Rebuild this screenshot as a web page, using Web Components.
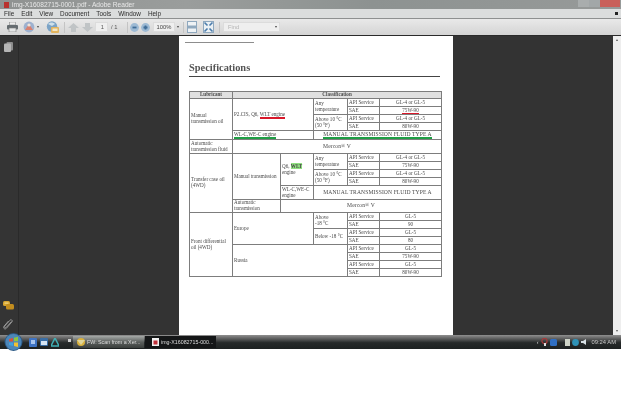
<!DOCTYPE html>
<html>
<head>
<meta charset="utf-8">
<title>img-X16082715-0001.pdf - Adobe Reader</title>
<style>
  html, body { margin: 0; background: #fff; }
  body { font-family: "Liberation Sans", sans-serif; }
</style>
</head>
<body>
<reader-app></reader-app>

<script>
// window chrome
class WinTitlebar extends HTMLElement {
  constructor() {
    super();
    this.attachShadow({ mode: 'open' });
    this.shadowRoot.innerHTML = `
<style>
  :host {
    display: flex; align-items: center; height: 9px; padding-left: 4px; gap: 3px;
    background: linear-gradient(90deg, #8f9291, #9a9d9c 30%, #8d9291 60%, #979a99);
    color: #e8e8e8; font: 6.6px "Liberation Sans", sans-serif; overflow: hidden;
  }
  .logo { width: 5px; height: 6px; background: #b8322e; }
  .name { flex: 1; white-space: nowrap; }
  .ctl { display: flex; height: 7px; align-self: flex-start; margin-right: 1px; }
  .ctl i { display: block; height: 7px; }
  .min { width: 11px; background: #a9adad; }
  .max { width: 11px; background: #a2a7a8; }
  .close { width: 20px; background: #c9605a; }
</style>
<span class="logo"></span><span class="name"><slot></slot></span>
<span class="ctl"><i class="min"></i><i class="max"></i><i class="close"></i></span>`;
  }
}
customElements.define('win-titlebar', WinTitlebar);

class WinMenubar extends HTMLElement {
  constructor() {
    super();
    this.attachShadow({ mode: 'open' });
    this.shadowRoot.innerHTML = `
<style>
  :host {
    display: flex; align-items: center; height: 9px; padding: 0 3px 0 4px; gap: 7px;
    background: #dbdddd; border-bottom: 1px solid #8e9090;
    color: #2c2c2c; font: 6.4px "Liberation Sans", sans-serif;
  }
  .end { margin-left: auto; width: 3px; height: 3px; background: #222; }
</style>
<slot></slot><span class="end"></span>`;
  }
}
customElements.define('win-menubar', WinMenubar);

class WinToolbar extends HTMLElement {
  constructor() {
    super();
    this.attachShadow({ mode: 'open' });
    this.shadowRoot.innerHTML = `
<style>
  :host {
    display: flex; align-items: center; height: 16px; padding-left: 7px;
    background: linear-gradient(#e9e9e9, #d4d4d4); border-bottom: 1px solid #2a2a2a;
    color: #555; font: 5.8px "Liberation Sans", sans-serif;
  }
  svg { display: block; flex: none; }
  .sep { width: 1px; height: 11px; background: #c4c4c4; flex: none; }
  .box {
    flex: none; height: 10px; box-sizing: border-box; background: #efefef;
    border: 1px solid #dcdcdc; display: flex; align-items: center;
  }
  .caret {
    flex: none; width: 0; height: 0; border: 1.5px solid transparent;
    border-top: 2px solid #444; border-bottom: 0;
  }
</style>
<svg width="11" height="10" viewBox="0 0 11 10"><rect x="2.5" y="0" width="6" height="3" fill="#eee" stroke="#888" stroke-width=".6"/><rect x="0" y="3" width="11" height="4.5" rx="1" fill="#656c70"/><rect x="2" y="6" width="7" height="4" fill="#e4e6e6" stroke="#7a7a7a" stroke-width=".6"/></svg>
<svg style="margin-left:5px" width="12" height="12" viewBox="0 0 12 12"><circle cx="6" cy="6" r="5.4" fill="#9db1cf"/><path d="M2 9 6 3l4 6z" fill="#d9806f"/><circle cx="6" cy="4" r="1.6" fill="#efe3da"/></svg>
<span class="caret" style="margin:0 0 0 2px"></span>
<svg style="margin-left:7px" width="13" height="13" viewBox="0 0 13 13"><circle cx="6" cy="5.5" r="5.2" fill="#7ba3c6"/><path d="M2 3c2-2 5-2 7 0l-3 2z" fill="#cfe0ea"/><rect x="5" y="6" width="8" height="6" rx="1" fill="#e2b45e"/><rect x="6.5" y="7.5" width="5" height="2.5" fill="#f4e7c6"/></svg>
<span class="sep" style="margin-left:5px"></span>
<svg style="margin-left:3px" width="11" height="9" viewBox="0 0 11 9"><path d="M5.5 0 11 5H8v4H3V5H0z" fill="#c0c4c6"/></svg>
<svg style="margin-left:3px" width="11" height="9" viewBox="0 0 11 9"><path d="M5.5 9 11 4H8V0H3v4H0z" fill="#c0c4c6"/></svg>
<span class="box" style="width:13px;margin-left:2px;justify-content:flex-end;padding-right:3px">1</span>
<span style="flex:none;width:20px;padding-left:3px;box-sizing:border-box">/ 1</span>
<span class="sep" style="margin-left:-1px"></span>
<svg style="margin-left:2px" width="9" height="9" viewBox="0 0 9 9"><circle cx="4.5" cy="4.5" r="4.4" fill="#9dbad4"/><rect x="2.5" y="3.6" width="4" height="1.8" fill="#3f6d98"/></svg>
<svg style="margin-left:2px" width="9" height="9" viewBox="0 0 9 9"><circle cx="4.5" cy="4.5" r="4.4" fill="#9dbad4"/><path d="M2.5 3.6h1.1V2.5h1.8v1.1h1.1v1.8H5.4v1.1H3.6V5.4H2.5z" fill="#3f6d98"/></svg>
<span class="box" style="width:22px;margin-left:3px;justify-content:center;color:#444">100%</span>
<span class="caret" style="margin-left:2px"></span>
<span class="sep" style="margin-left:4px"></span>
<svg style="margin-left:3px" width="10" height="12" viewBox="0 0 10 12"><rect x=".5" y=".5" width="9" height="11" fill="#eef2f5" stroke="#8fa8be"/><rect x="0" y="4.5" width="10" height="3" fill="#8fa8be"/></svg>
<svg style="margin-left:6px" width="11" height="12" viewBox="0 0 11 12"><rect x=".5" y=".5" width="10" height="11" fill="#eaf0f4" stroke="#8fa8be"/><path d="M1.5 1.5 4.5 4.5M9.5 1.5 6.5 4.5M1.5 10.5 4.5 7.5M9.5 10.5 6.5 7.5" stroke="#4a7bab" stroke-width="1.6"/></svg>
<span class="sep" style="margin-left:5px"></span>
<span class="box" style="width:57px;margin-left:3px;padding-left:4px;color:#b4b4b4;gap:0">Find<span class="caret" style="margin-left:auto;margin-right:2px"></span></span>`;
  }
}
customElements.define('win-toolbar', WinToolbar);

// left navigation strip
class ReaderRail extends HTMLElement {
  constructor() {
    super();
    this.attachShadow({ mode: 'open' });
    this.shadowRoot.innerHTML = `
<style>
  :host {
    display: flex; flex-direction: column; align-items: center; flex: none;
    width: 19px; box-sizing: border-box; background: #343434; border-right: 1px solid #2a2a2a;
    padding: 6px 2px 5px 0;
  }
  svg { display: block; }
  .gap { flex: 1; }
</style>
<svg width="9" height="10" viewBox="0 0 9 10"><rect x="2.5" y="0" width="6.5" height="8.5" rx="1" fill="#8d8d8d"/><rect x="0" y="1.5" width="7" height="8.5" rx="1" fill="#b5b5b5"/></svg>
<span class="gap"></span>
<svg width="11" height="9" viewBox="0 0 11 9"><rect x="0" y="0" width="7" height="5" rx="1.5" fill="#d8a52e"/><rect x="3" y="3" width="8" height="5.5" rx="1.5" fill="#c28d1f"/><rect x="1.5" y="1.5" width="4" height="1.2" fill="#f0d78a"/></svg>
<svg style="margin-top:9px" width="10" height="11" viewBox="0 0 10 11"><path d="M8.5 2.5 3.2 8.4c-.9 1-2.4-.2-1.5-1.3L7 1.2C8-.1 10 1.4 9 2.8L3.4 9.3C2 11 -.4 9 1 7.3L5.5 2" fill="none" stroke="#a8a8a8" stroke-width=".8"/></svg>`;
  }
}
customElements.define('reader-rail', ReaderRail);

class ReaderScrollbar extends HTMLElement {
  constructor() {
    super();
    this.attachShadow({ mode: 'open' });
    this.shadowRoot.innerHTML = `
<style>
  :host {
    display: flex; flex-direction: column; align-items: center; justify-content: space-between;
    flex: none; width: 8px; box-sizing: border-box; padding: 3px 0; background: #eeeeee;
  }
  i { display: block; width: 0; height: 0; border: 1.5px solid transparent; }
  .up { border-top: 0; border-bottom: 2px solid #555; }
  .down { border-bottom: 0; border-top: 2px solid #555; }
</style>
<i class="up"></i><i class="down"></i>`;
  }
}
customElements.define('reader-scrollbar', ReaderScrollbar);

// the scanned table
class SpecTable extends HTMLElement {
  constructor() {
    super();
    this.attachShadow({ mode: 'open' });
    const api = (v, s = 'API Service') => `<td>${s}</td><td class="c">${v}</td>`;
    const atf = 'MANUAL TRANSMISSION FLUID TYPE A';
    this.shadowRoot.innerHTML = `
<style>
  :host { display: block; color: #4a4a4a; font: 5.1px/5.6px "Liberation Serif", serif; }
  table { border-collapse: collapse; table-layout: fixed; width: 252px; border: 1px solid #555; }
  td { border: 1px solid #7d7d7d; padding: 0 1px; }
  .c { text-align: center; }
  .h { background: #e0e0e0; font-weight: bold; text-align: center; }
  .big { font-size: 5.6px; letter-spacing: .1px; }
  .red { border-bottom: 2px solid #d8182a; }
  .red.thin { border-bottom-width: 1px; }
  .green { border-bottom: 2px solid #1f9e45; }
  .hl { background: #8fe07f; font-weight: bold; }
  tr { height: 8px; }
  .tall { height: 9px; }
</style>
<table>
  <colgroup>
    <col style="width:43px"><col style="width:48px"><col style="width:33px">
    <col style="width:34px"><col style="width:32px"><col style="width:62px">
  </colgroup>
  <tr style="height:7px"><td class="h">Lubricant</td><td class="h" colspan="5">Classification</td></tr>
  <tr><td rowspan="5">Manual<br>transmission oil</td>
    <td colspan="2" rowspan="4">P2.CIS, Q6, <span class="red">WLT engine</span></td>
    <td rowspan="2">Any<br>temperature</td>${api('GL-4 or GL-5')}</tr>
  <tr><td>SAE</td><td class="c"><span class="red thin">75W-90</span></td></tr>
  <tr><td rowspan="2">Above 10 °C<br>(50 °F)</td>${api('GL-4 or GL-5')}</tr>
  <tr>${api('80W-90', 'SAE')}</tr>
  <tr class="tall"><td colspan="2"><span class="green">WL-C,WE-C engine</span></td>
    <td colspan="3" class="c big"><span class="green">${atf}</span></td></tr>
  <tr style="height:14px"><td>Automatic<br>transmission fluid</td><td colspan="5" class="c big">Mercon® V</td></tr>
  <tr><td rowspan="6">Transfer case oil<br>(4WD)</td>
    <td rowspan="5">Manual transmission</td>
    <td rowspan="4">Q6, <span class="hl">WLT</span><br>engine</td>
    <td rowspan="2">Any<br>temperature</td>${api('GL-4 or GL-5')}</tr>
  <tr>${api('75W-90', 'SAE')}</tr>
  <tr><td rowspan="2">Above 10 °C<br>(50 °F)</td>${api('GL-4 or GL-5')}</tr>
  <tr>${api('80W-90', 'SAE')}</tr>
  <tr style="height:14px"><td>WL-C,WE-C<br>engine</td><td colspan="3" class="c big">${atf}</td></tr>
  <tr style="height:13px"><td>Automatic<br>transmission</td><td colspan="4" class="c big">Mercon® V</td></tr>
  <tr><td rowspan="8">Front differential<br>oil (4WD)</td>
    <td colspan="2" rowspan="4">Europe</td>
    <td rowspan="2">Above<br>-18 °C</td>${api('GL-5')}</tr>
  <tr>${api('90', 'SAE')}</tr>
  <tr><td rowspan="2">Below -18 °C</td>${api('GL-5')}</tr>
  <tr>${api('80', 'SAE')}</tr>
  <tr><td colspan="3" rowspan="4">Russia</td>${api('GL-5')}</tr>
  <tr>${api('75W-90', 'SAE')}</tr>
  <tr>${api('GL-5')}</tr>
  <tr>${api('80W-90', 'SAE')}</tr>
</table>`;
  }
}
customElements.define('spec-table', SpecTable);

class PdfPage extends HTMLElement {
  constructor() {
    super();
    this.attachShadow({ mode: 'open' });
    this.shadowRoot.innerHTML = `
<style>
  :host {
    display: block; flex: none; width: 274px; box-sizing: border-box;
    background: #fff; padding-top: 6px; overflow: hidden;
  }
  .top { width: 69px; height: 1px; margin-left: 6px; background: #8d8d8d; }
  h1 {
    margin: 19px 0 0 10px; font: bold 10.4px/12px "Liberation Serif", serif; color: #555;
  }
  .rule { width: 251px; height: 1px; margin: 2px 0 14px 10px; background: #444; }
  spec-table { margin-left: 10px; }
</style>
<div class="top"></div>
<h1><slot></slot></h1>
<div class="rule"></div>
<spec-table></spec-table>`;
  }
}
customElements.define('pdf-page', PdfPage);

class WinTaskbar extends HTMLElement {
  constructor() {
    super();
    this.attachShadow({ mode: 'open' });
    this.shadowRoot.innerHTML = `
<style>
  :host {
    display: flex; align-items: center; height: 14px; position: relative;
    background: linear-gradient(#909090, #6a6a6a 20%, #262a2a 55%, #1d2121);
    color: #dedede; font: 5.3px "Liberation Sans", sans-serif;
  }
  svg { display: block; flex: none; }
  .orb { position: absolute; left: 4px; top: -2px; }
  .quick { display: flex; gap: 3px; align-items: center; margin-left: 29px; flex: none; width: 44px; }
  .btn {
    flex: none; width: 71px; height: 12px; box-sizing: border-box; padding-left: 4px; margin-right: 1px;
    display: flex; align-items: center; gap: 2px; white-space: nowrap;
  }
  .btn.one { background: linear-gradient(#a5a9a7, #5c605e 50%, #3a3e3c); }
  .btn.two { background: #141617; }
  .tray { margin-left: auto; display: flex; align-items: center; gap: 2px; padding-right: 5px; }
  .time { margin-left: 4px; color: #c8c8c8; white-space: nowrap; font-size: 5.8px; }
</style>
<svg class="orb" width="19" height="18" viewBox="0 0 19 18">
  <circle cx="9.5" cy="9" r="9" fill="#2c5a86"/>
  <circle cx="9.5" cy="9" r="8" fill="#4c86b8"/>
  <path d="M5 6l4-1v3.5H5z" fill="#d8533c"/><path d="M10 4.8l4-1v4.5h-4z" fill="#8dc63f"/>
  <path d="M5 9.5h4V13l-4-1z" fill="#3fa3e0"/><path d="M10 9.5h4v4.5l-4-1z" fill="#f2c230"/>
</svg>
<span class="quick">
  <svg width="8" height="9" viewBox="0 0 8 9"><rect width="8" height="9" rx="1" fill="#3f74c4"/><rect x="2" y="2" width="4" height="4" fill="#a9c6ee"/></svg>
  <svg width="8" height="8" viewBox="0 0 8 8"><rect width="8" height="8" rx="1" fill="#3a6ea5"/><rect x="1" y="3" width="6" height="4" fill="#d7e5f2"/></svg>
  <svg width="8" height="9" viewBox="0 0 8 9"><path d="M4 0 8 8H0z" fill="none" stroke="#3fb0b5" stroke-width="1.5"/></svg>
  <svg style="margin-left:6px;margin-bottom:4px" width="3" height="3" viewBox="0 0 3 3"><rect width="3" height="3" fill="#cfcfcf"/></svg>
</span>
<span class="btn one">
  <svg width="8" height="8" viewBox="0 0 8 8"><circle cx="4" cy="4" r="4" fill="#d9b13c"/><path d="M0 2h8L4 7z" fill="#e0d59a"/></svg>
  <span>FW: Scan from a Xer...</span>
</span>
<span class="btn two">
  <svg width="7" height="8" viewBox="0 0 7 8" style="margin-left:3px"><rect width="7" height="8" fill="#f2f2f2"/><rect x="1.5" y="2.5" width="4" height="4" fill="#c2303a"/></svg>
  <span>img-X16082715-000...</span>
</span>
<span class="tray">
  <span style="color:#ddd">‹</span>
  <svg width="7" height="8" viewBox="0 0 7 8"><circle cx="3.5" cy="3" r="2.6" fill="none" stroke="#a83a3a" stroke-width="1.2"/><rect x="3" y="5" width="2" height="3" fill="#ddd"/></svg>
  <svg width="7" height="7" viewBox="0 0 7 7"><rect width="7" height="7" rx="1.5" fill="#2f6fc4"/></svg>
  <svg style="margin-left:6px" width="5" height="7" viewBox="0 0 5 7"><rect width="5" height="7" fill="#cfd4c8"/></svg>
  <svg width="7" height="7" viewBox="0 0 7 7"><circle cx="3.5" cy="3.5" r="3.4" fill="#2f93b8"/></svg>
  <svg width="5" height="6" viewBox="0 0 5 6"><path d="M0 2h2l3-2v6L2 4H0z" fill="#d8e2e6"/></svg>
  <span class="time">09:24 AM</span>
</span>`;
  }
}
customElements.define('win-taskbar', WinTaskbar);

class ReaderApp extends HTMLElement {
  constructor() {
    super();
    this.attachShadow({ mode: 'open' });
    this.shadowRoot.innerHTML = `
<style>
  :host { display: block; width: 621px; height: 408px; background: #fff; overflow: hidden; filter: blur(.5px); }
  .main { display: flex; height: 299px; background: #333; }
  .canvas { flex: 1; display: flex; justify-content: center; overflow: hidden; }
</style>
<win-titlebar>img-X16082715-0001.pdf - Adobe Reader</win-titlebar>
<win-menubar>
  <span>File</span><span>Edit</span><span>View</span><span>Document</span>
  <span>Tools</span><span>Window</span><span>Help</span>
</win-menubar>
<win-toolbar></win-toolbar>
<div class="main">
  <reader-rail></reader-rail>
  <div class="canvas"><pdf-page>Specifications</pdf-page></div>
  <reader-scrollbar></reader-scrollbar>
</div>
<win-taskbar></win-taskbar>`;
  }
}
customElements.define('reader-app', ReaderApp);
</script>
</body>
</html>
